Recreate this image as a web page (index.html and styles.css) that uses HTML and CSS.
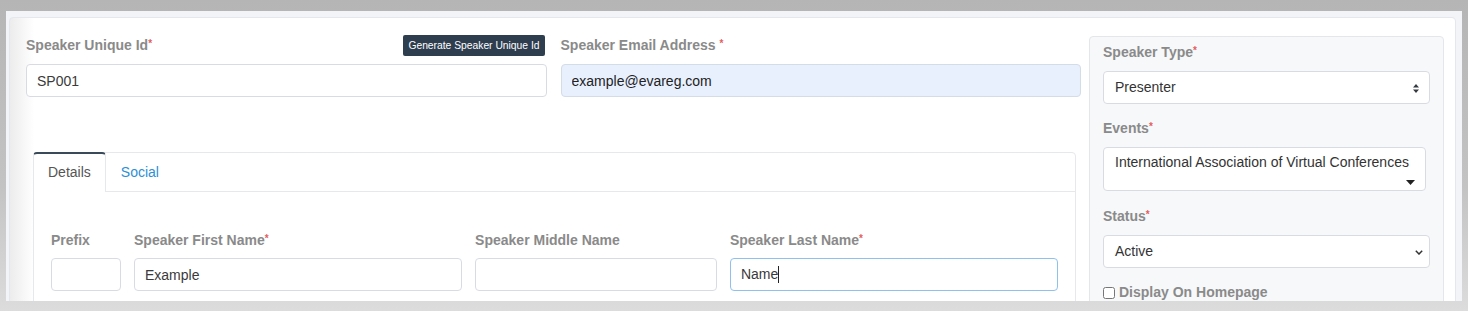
FILE: index.html
```html
<!DOCTYPE html>
<html lang="en">
<head>
  <meta charset="UTF-8" />
  <meta name="viewport" content="width=device-width, initial-scale=1.0"/>
  <title>Speaker</title>
  <link rel="stylesheet" href="styles.css">
</head>
<body>
  <div class="frame">
    <div class="card">
      <div class="main">
        <div class="top-row">
          <div class="field">
            <div class="label-row">
              <label class="label">Speaker Unique Id<span class="req">*</span></label>
              <button class="gen-btn">Generate Speaker Unique Id</button>
            </div>
            <input class="input" type="text" value="SP001">
          </div>
          <div class="field">
            <div class="label-row">
              <label class="label">Speaker Email Address <span class="req">*</span></label>
            </div>
            <input class="input autofill" type="text" value="example@evareg.com">
          </div>
        </div>

        <div class="tabs">
          <div class="tab-head">
            <div class="tab active">Details</div>
            <div class="tab link">Social</div>
          </div>
          <div class="tab-body">
            <div class="name-row">
              <div class="field">
                <label class="label">Prefix</label>
                <input class="input" type="text" value="">
              </div>
              <div class="field">
                <label class="label">Speaker First Name<span class="req">*</span></label>
                <input class="input" type="text" value="Example">
              </div>
              <div class="field">
                <label class="label">Speaker Middle Name</label>
                <input class="input" type="text" value="">
              </div>
              <div class="field">
                <label class="label">Speaker Last Name<span class="req">*</span></label>
                <div class="input focus">Name<span class="caret"></span></div>
              </div>
            </div>
          </div>
        </div>
      </div>

      <div class="aside">
        <div class="group">
          <label class="label">Speaker Type<span class="req">*</span></label>
          <div class="select">
            Presenter
            <svg class="sel-icon updown" width="6" height="9" viewBox="0 0 4 6"><path fill="#343a40" d="M2 0L0 2.3h4zm0 6L0 3.7h4z"/></svg>
          </div>
        </div>
        <div class="group events-group">
          <label class="label">Events<span class="req">*</span></label>
          <div class="multi">
            International Association of Virtual Conferences
            <svg class="sel-icon tri" width="9" height="5" viewBox="0 0 9 5"><path fill="#222" d="M0 0h9L4.5 5z"/></svg>
          </div>
        </div>
        <div class="group">
          <label class="label">Status<span class="req">*</span></label>
          <div class="select">
            Active
            <svg class="sel-icon chev" width="8" height="5" viewBox="0 0 8 5"><path fill="none" stroke="#333" stroke-width="1.5" d="M0.8 0.8L4 4l3.2-3.2"/></svg>
          </div>
        </div>
        <label class="check"><input type="checkbox"> Display On Homepage</label>
      </div>
    </div>
  </div>
</body>
</html>
```

FILE: styles.css
```css
body {
  margin: 0;
  height: 311px;
  overflow: hidden;
  background: linear-gradient(#b4b5b4 0%, #c2c3c2 60%, #dcdcdc 100%);
  font-family: 'Liberation Sans', Arial, sans-serif;
  font-size: 14px;
  color: #333;
}

.frame {
  margin: 11px 6px 0 6px;
  height: 290px;
  overflow: hidden;
  background: #f3f4f8;
  padding: 6px 6px 0 3px;
  box-sizing: border-box;
}

.card {
  display: flex;
  gap: 8px;
  height: 400px;
  padding: 17px 11px 0 16px;
  background: linear-gradient(90deg, #ececec 0, #fff 24px);
  border: 1px solid #e5e7ee;
  border-radius: 4px;
}

.main {
  flex: 1;
}

.top-row {
  display: grid;
  grid-template-columns: 1fr 1fr;
  gap: 14px;
}

.field {
  display: flex;
  flex-direction: column;
}

.label-row {
  display: flex;
  justify-content: space-between;
  align-items: flex-start;
}

.label {
  display: block;
  font-weight: bold;
  color: #8a8a8a;
  line-height: 21px;
  height: 21px;
  margin-bottom: 8px;
}

.req {
  color: #e35d5d;
  font-size: 10px;
  line-height: 0;
  vertical-align: 3px;
}

.gen-btn {
  height: 21px;
  padding: 0 5px;
  margin-right: 2px;
  border: none;
  border-radius: 2px;
  background: #2f3e4f;
  color: #fff;
  font-family: 'Liberation Sans', Arial, sans-serif;
  font-size: 10.3px;
}

.input {
  display: block;
  box-sizing: border-box;
  width: 100%;
  height: 33px;
  padding: 0 10px;
  border: 1px solid #d8dce2;
  border-radius: 4px;
  background: #fff;
  font-family: 'Liberation Sans', Arial, sans-serif;
  font-size: 14px;
  color: #3a3a3a;
  line-height: 31px;
}

.input.autofill {
  background: #e8f0fe;
  border-color: #d4dce8;
  color: #222;
}

.input.focus {
  border-color: #8fc1ef;
}

.caret {
  display: inline-block;
  width: 1px;
  height: 17px;
  background: #222;
  vertical-align: -4px;
}

.tabs {
  margin: 55px 5px 0 7px;
  border: 1px solid #e6e8ec;
  border-radius: 4px;
  height: 200px;
}

.tab-head {
  display: flex;
  height: 38px;
  border-bottom: 1px solid #e6e8ec;
}

.tab {
  line-height: 38px;
  padding: 0 14px;
  color: #555;
}

.tab.active {
  margin: -1px 0 -1px -1px;
  height: 38px;
  border-top: 2px solid #3a4a5b;
  border-left: 1px solid #e6e8ec;
  border-right: 1px solid #e6e8ec;
  border-radius: 4px 4px 0 0;
  background: #fff;
  line-height: 37px;
}

.tab.link {
  color: #2d8fd5;
  padding-left: 15px;
}

.tab-body {
  padding: 38px 17px 0 17px;
}

.name-row {
  display: grid;
  grid-template-columns: 70px 327fr 241fr 327fr;
  gap: 13px;
}

.name-row .label {
  margin-bottom: 7px;
}

.aside {
  width: 355px;
  box-sizing: border-box;
  margin-top: 1px;
  padding: 5px 13px 0 13px;
  background: #f7f8fa;
  border: 1px solid #e4e6ea;
  border-radius: 4px;
}

.group {
  margin-bottom: 14px;
}

.events-group {
  margin-bottom: 15px;
}

.select,
.multi {
  position: relative;
  box-sizing: border-box;
  background: #fff;
  border: 1px solid #d8dce2;
  border-radius: 4px;
  color: #333;
}

.select {
  height: 33px;
  line-height: 31px;
  padding: 0 11px;
}

.multi {
  width: calc(100% - 4px);
  height: 44px;
  padding: 4px 11px 0 11px;
  line-height: 20px;
}

.sel-icon {
  position: absolute;
}

.updown {
  right: 10px;
  top: 12px;
}

.chev {
  right: 6px;
  top: 14px;
}

.tri {
  right: 10px;
  bottom: 5px;
}

.check {
  display: flex;
  align-items: center;
  font-weight: bold;
  color: #8a8a8a;
  line-height: 21px;
}

.check input {
  margin: 0 4px 0 0;
  width: 12px;
  height: 12px;
}
```
